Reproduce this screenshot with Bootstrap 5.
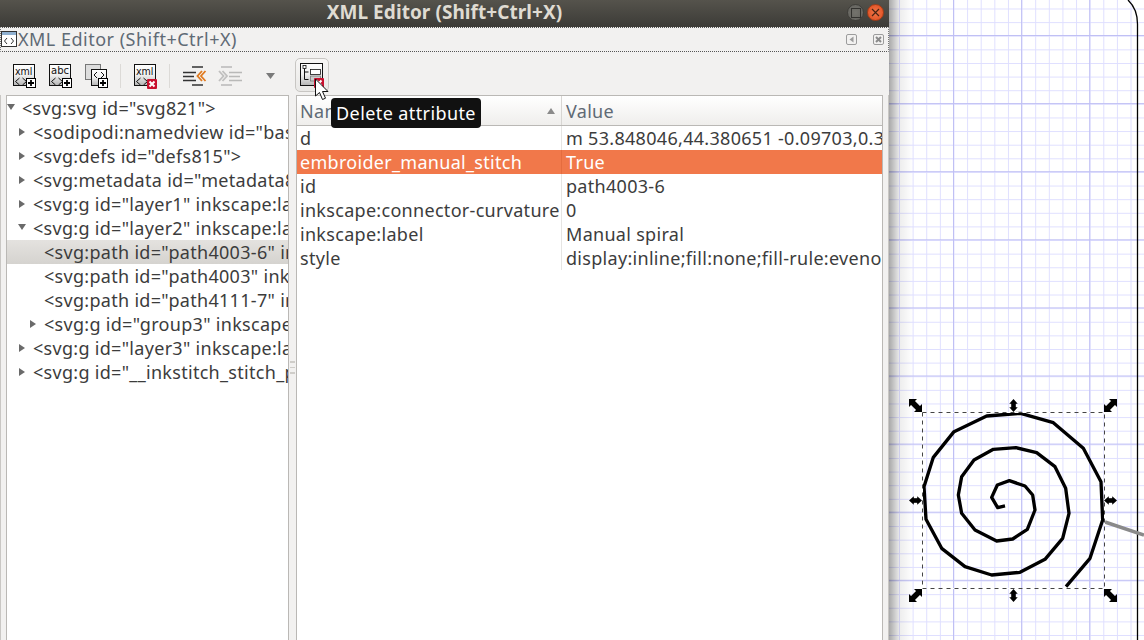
<!DOCTYPE html>
<html lang="en">
<head>
<meta charset="utf-8">
<title>XML Editor</title>
<link href="https://cdn.jsdelivr.net/npm/bootstrap@5.3.0/dist/css/bootstrap.min.css" rel="stylesheet">
<style>
html,body{margin:0;height:640px;overflow:hidden;background:#fff}
body{font-family:"Noto Sans","Open Sans",sans-serif;font-size:18px;letter-spacing:.3px;color:#3c3c3c}
.screen{width:1144px;height:640px}
.win{width:889px;height:640px;background:#f2f1f0;flex:none}
.wtitle{height:27px;background:linear-gradient(#55534c,#3c3b37);color:#dfdbd2;font-weight:700;font-size:19px;letter-spacing:.06px;line-height:25px}
.wbtn{width:17px;height:17px;border-radius:50%;top:4px}
.wmax{right:25px;background:radial-gradient(#74736d,#62615c);border:1px solid #3f3e3a}
.wclose{right:5px;background:radial-gradient(#f0774a,#df4a1c);border:1px solid #a33c18}
.dock{height:25px;border-top:1px dotted #555;border-bottom:1px dotted #555;border-left:1px dotted #777;border-right:1px dotted #777;color:#5f6a75;line-height:25px;letter-spacing:.5px}
.tbar{height:43px;padding-left:12px;padding-top:4px}
.tool{width:24px;height:24px;flex:none;overflow:visible}
.tgap{margin-left:12px}
.tsep{width:1px;height:24px;background:#dcdad7;flex:none}
.tool-on{width:34px;height:34px;border:1px solid #c8c6c3;border-radius:5px;background:linear-gradient(#f7f6f5,#e9e8e6);margin-left:20px;margin-top:-2px;flex:none}
.panes{height:545px;padding-left:5px;padding-right:3px;border-left:1px solid #c9c7c4;border-right:1px solid #c9c7c4}
.tree{width:283px;background:#fff;border:1px solid #bab8b5;border-bottom:0}
.grip{width:7px}
.gripbar{width:5px;height:1.500px;background:#cfcdc9}
.attrs{width:587px;background:#fff;border:1px solid #bab8b5;border-bottom:0}
.trow{height:24px;line-height:24px;white-space:nowrap;overflow:hidden;position:relative;border:0;padding:0;background:transparent;color:#3c3c3c;border-radius:0}
.trow.on{background:linear-gradient(#e4e2df,#d5d3cf)}
.l0{padding-left:15px}.l1{padding-left:26px}.l2{padding-left:37px}
.arr{position:absolute;display:block}
.arr-r{width:0;height:0;border-top:4px solid transparent;border-bottom:4px solid transparent;border-left:6px solid #6a6a6a;top:8px}
.arr-d{width:0;height:0;border-left:4px solid transparent;border-right:4px solid transparent;border-top:6px solid #6a6a6a;top:8px}
.at0{left:0}.at1{left:12px}.at1d{left:11px}.at2{left:23px}
.thead{height:30px;background:linear-gradient(#fff,#efeeec);border-bottom:1px solid #bab8b5;line-height:31px;color:#5f6a75}
.cname{width:265px;flex:none;padding-left:3px;position:relative;overflow:hidden;white-space:nowrap}
.cval{flex:1;padding-left:4px;overflow:hidden;white-space:nowrap;min-width:0}
.thead .cname{border-right:1px solid #d8d6d3}
.crow{height:24px;line-height:24px}
.crow .cname{border-right:1px solid #e6e5e3}
.crow.on{background:#f1784a;color:#fff}
.crow.on .cname{border-right-color:#e56c3e}
.sort{position:absolute;right:6px;top:12px;width:0;height:0;border-left:4px solid transparent;border-right:4px solid transparent;border-bottom:6px solid #8a8a8a}
.tipbox{position:absolute;left:331px;top:98px;width:150px;height:30px;background:#111;color:#fff;border-radius:4px;text-align:center;line-height:30px;z-index:5;white-space:nowrap;letter-spacing:.4px}
.ptr{position:absolute;left:314px;top:78px;z-index:6}
.cvs{flex:1;position:relative;overflow:hidden}
.cvs svg{display:block}
.shade{position:absolute;left:0;top:0;bottom:0;width:24px;background:linear-gradient(90deg,rgba(0,0,0,.34),rgba(0,0,0,.07) 45%,rgba(0,0,0,0))}
.ico text{font-family:"DejaVu Sans","Liberation Sans",sans-serif;fill:#111;letter-spacing:0}
</style>
</head>
<body>
<svg width="0" height="0" class="position-absolute">
<defs>
<linearGradient id="gb" x1="0" y1="0" x2="0" y2="1"><stop offset="0" stop-color="#fff"/><stop offset=".5" stop-color="#f0f0f0"/><stop offset="1" stop-color="#b4b4b4"/></linearGradient>
<g id="plus"><rect x="14.500" y="14.500" width="9" height="9" fill="#fff" stroke="#000"/><path d="M19 16v6M16 19h6" stroke="#000" stroke-width="1.800"/></g>
<g id="del"><rect x="14" y="15" width="10" height="10" rx="1" fill="#c8102e"/><path d="M16.500 17.500l5 5M21.500 17.500l-5 5" stroke="#fff" stroke-width="2"/></g>
<g id="box"><rect x="1.500" y=".5" width="21" height="21" fill="url(#gb)" stroke="#111"/></g>
<path id="lg" d="M7.500 14l-4 3.500 4 3.500M10.500 14l4 3.500-4 3.500" fill="none" stroke="#111"/>
<g id="dg"><path d="M-6.500-6.500h8l-8 8zM6.500 6.500h-8l8-8z"/><path d="M-3.500-3.500l7 7" stroke="#000" stroke-width="5.500"/></g>
<g id="vt"><path d="M0-6.500l4.200 4.800h-8.400zM0 6.500l4.200-4.800h-8.400z"/><rect x="-2.300" y="-2.500" width="4.600" height="5"/></g>
</defs>
</svg>
<div class="screen d-flex">
  <div class="win d-flex flex-column position-relative">
    <div class="wtitle text-center position-relative">XML Editor (Shift+Ctrl+X)
      <span class="wbtn wmax position-absolute d-flex align-items-center justify-content-center"><svg width="10" height="10"><rect x=".5" y=".5" width="9" height="9" fill="none" stroke="#33322f"/></svg></span>
      <span class="wbtn wclose position-absolute d-flex align-items-center justify-content-center"><svg width="9" height="9"><path d="M1 1l7 7M8 1l-7 7" stroke="#4a2312" stroke-width="1.200"/></svg></span>
    </div>
    <div class="dock d-flex align-items-center">
      <svg width="17" height="17" viewBox="0 0 17 17"><rect x=".5" y=".5" width="15" height="15" fill="#fff" stroke="#333"/><rect x="1" y="1" width="14" height="3" fill="#8fb0d0"/><path d="M6 7l-2.500 3 2.500 3M10 7l2.500 3-2.500 3" fill="none" stroke="#333"/></svg>
      <span>XML Editor (Shift+Ctrl+X)</span>
      <span class="ms-auto d-flex gap-3 me-1 align-items-center">
        <svg width="11" height="11"><rect x=".5" y=".5" width="10" height="10" rx="1.500" fill="none" stroke="#9c9c9c"/><path d="M7.500 2.500v6l-4-3z" fill="#9c9c9c"/></svg>
        <svg width="11" height="11"><rect x=".5" y=".5" width="10" height="10" rx="1.500" fill="none" stroke="#9c9c9c"/><path d="M3 3l5 5M8 3l-5 5" stroke="#8a8a8a" stroke-width="2"/></svg>
      </span>
    </div>
    <div class="tbar d-flex align-items-center">
      <svg class="tool ico" viewBox="0 0 24 24"><use href="#box"/><text x="3" y="10.500" font-size="10.500" textLength="17.500" lengthAdjust="spacingAndGlyphs">xml</text><use href="#lg"/><use href="#plus"/></svg>
      <svg class="tool ico tgap" viewBox="0 0 24 24"><use href="#box"/><text x="3" y="10" font-size="10.500" textLength="18" lengthAdjust="spacingAndGlyphs">abc</text><use href="#lg"/><use href="#plus"/></svg>
      <svg class="tool ico tgap" viewBox="0 0 24 24"><rect x="1.500" y=".5" width="15" height="15" fill="#ddd" stroke="#777"/><rect x="7.500" y="5.500" width="15" height="16" fill="url(#gb)" stroke="#111"/><path d="M13 8l-3 3 3 3M17 8l3 3-3 3" fill="none" stroke="#111"/><use href="#plus"/></svg>
      <span class="tsep tgap"></span>
      <svg class="tool ico tgap" viewBox="0 0 24 24"><use href="#box"/><text x="3" y="10.500" font-size="10.500" textLength="17.500" lengthAdjust="spacingAndGlyphs">xml</text><use href="#lg"/><use href="#del"/></svg>
      <span class="tsep tgap"></span>
      <svg class="tool tgap" viewBox="0 0 24 24"><path d="M10 3h11M1 8.500h13M1 12.500h11M1 16.500h13M10 21h11" stroke="#333" stroke-width="1.700"/><path d="M20 7l-4.500 5 4.500 5M23.500 7l-4.500 5 4.500 5" fill="none" stroke="#e07a1f" stroke-width="1.800"/></svg>
      <svg class="tool tgap" viewBox="0 0 24 24" opacity=".4"><path d="M3 3h11M11 8.500h13M11 12.500h11M11 16.500h13M3 21h11" stroke="#666" stroke-width="1.700"/><path d="M1 7l4.500 5-4.500 5M4.500 7l4.500 5-4.500 5" fill="none" stroke="#777" stroke-width="1.800"/></svg>
      <svg width="9" height="6" class="ms-4"><path d="M0 0h9L4.500 6z" fill="#7a7a7a"/></svg>
      <span class="tool-on d-flex align-items-center justify-content-center">
        <svg class="tool" viewBox="0 0 24 24"><rect x=".5" y=".5" width="22" height="22" fill="url(#gb)" stroke="#111"/><rect x="3" y="2.500" width="3" height="3" fill="#fff" stroke="#111" stroke-width=".8"/><path d="M4.500 5.500v11h4M4.500 9h4" fill="none" stroke="#111"/><rect x="10.500" y="6.500" width="10" height="5" fill="#fff" stroke="#111" stroke-width=".8"/><rect x="10.500" y="13" width="10" height="5" fill="#ccc" stroke="#777" stroke-width=".8"/><use href="#del"/></svg>
      </span>
    </div>
    <div class="panes d-flex">
      <div class="tree overflow-hidden">
        <div class="list-group list-group-flush">
          <div class="trow l0"><i class="arr arr-d at0"></i>&lt;svg:svg id="svg821"&gt;</div>
          <div class="trow l1"><i class="arr arr-r at1"></i>&lt;sodipodi:namedview id="base" pagecolor</div>
          <div class="trow l1"><i class="arr arr-r at1"></i>&lt;svg:defs id="defs815"&gt;</div>
          <div class="trow l1"><i class="arr arr-r at1"></i>&lt;svg:metadata id="metadata818"&gt;</div>
          <div class="trow l1"><i class="arr arr-r at1"></i>&lt;svg:g id="layer1" inkscape:label="Layer"</div>
          <div class="trow l1"><i class="arr arr-d at1d"></i>&lt;svg:g id="layer2" inkscape:label="Layer"</div>
          <div class="trow l2 on">&lt;svg:path id="path4003-6" inkscape:label</div>
          <div class="trow l2">&lt;svg:path id="path4003" inkscape:label</div>
          <div class="trow l2">&lt;svg:path id="path4111-7" inkscape:label</div>
          <div class="trow l2"><i class="arr arr-r at2"></i>&lt;svg:g id="group3" inkscape:label="x"</div>
          <div class="trow l1"><i class="arr arr-r at1"></i>&lt;svg:g id="layer3" inkscape:label="Layer"</div>
          <div class="trow l1"><i class="arr arr-r at1"></i>&lt;svg:g id="__inkstitch_stitch_plan__"&gt;</div>
        </div>
      </div>
      <div class="grip d-flex flex-column align-items-center justify-content-center gap-1"><span class="gripbar"></span><span class="gripbar"></span><span class="gripbar"></span></div>
      <div class="attrs overflow-hidden">
        <div class="thead d-flex"><div class="cname">Name<i class="sort"></i></div><div class="cval">Value</div></div>
        <div class="crow d-flex"><div class="cname">d</div><div class="cval">m 53.848046,44.380651 -0.09703,0.3327 -0.1</div></div>
        <div class="crow d-flex on"><div class="cname">embroider_manual_stitch</div><div class="cval">True</div></div>
        <div class="crow d-flex"><div class="cname">id</div><div class="cval">path4003-6</div></div>
        <div class="crow d-flex"><div class="cname">inkscape:connector-curvature</div><div class="cval">0</div></div>
        <div class="crow d-flex"><div class="cname">inkscape:label</div><div class="cval">Manual spiral</div></div>
        <div class="crow d-flex"><div class="cname">style</div><div class="cval">display:inline;fill:none;fill-rule:evenodd;stroke</div></div>
      </div>
    </div>
    <div class="tipbox">Delete attribute</div>
    <svg class="ptr" width="16" height="24" viewBox="0 0 16 24"><path d="M1.500 1v17l4-3.500 3 7 3-1.300-3-6.700h5.500z" fill="#fff" stroke="#111"/></svg>
  </div>
  <div class="cvs">
    <svg width="255" height="640" viewBox="889 0 255 640">
      <defs>
        <pattern id="gmin" patternUnits="userSpaceOnUse" x="899" y="8.500" width="13.620" height="13.620"><path d="M.5 0v13.620M0 .5h13.620" stroke="#dfdfff" fill="none"/></pattern>
        <pattern id="gmaj" patternUnits="userSpaceOnUse" x="953" y="35" width="68.100" height="68.100"><path d="M.5 0v68.100M0 .5h68.100" stroke="#c0c0f4" fill="none"/></pattern>
      </defs>
      <rect x="889" y="0" width="255" height="640" fill="#fff"/>
      <rect x="889" y="0" width="255" height="640" fill="url(#gmin)"/>
      <rect x="889" y="0" width="255" height="640" fill="url(#gmaj)"/>
      <path d="M1128 0q9.500 9 9.500 24V640" fill="none" stroke="#000" stroke-width="1.300"/>
      <path d="M1105 522L1144 535" stroke="#8a8a8a" stroke-width="3.500"/>
      <g transform="translate(890 380) scale(.33333)">
        <polyline fill="none" stroke="#000" stroke-width="10" stroke-linejoin="round" points="528,620 600,535 638,420 633,305 580,205 490,128 392,100 290,108 192,155 130,232 102,320 108,418 155,505 225,560 305,585 390,577 465,538 518,475 537,400 527,325 495,260 440,218 378,203 310,208 252,240 215,290 205,345 215,400 255,450 320,483 368,477 412,448 435,390 428,345 405,318 358,302 322,315 305,352 323,383 345,378"/>
      </g>
      <rect x="922.500" y="412.500" width="182" height="176" fill="none" stroke="#fff"/>
      <rect x="922.500" y="412.500" width="182" height="176" fill="none" stroke="#444" stroke-dasharray="4 4"/>
      <g fill="#000">
        <use href="#dg" transform="translate(915.500 405.500)"/>
        <use href="#dg" transform="translate(1110.500 405.500) rotate(90)"/>
        <use href="#dg" transform="translate(915.500 595.500) rotate(90)"/>
        <use href="#dg" transform="translate(1110.500 595.500)"/>
        <use href="#vt" transform="translate(1013.500 405.500)"/>
        <use href="#vt" transform="translate(1013.500 595.500)"/>
        <use href="#vt" transform="translate(915.500 500.500) rotate(90)"/>
        <use href="#vt" transform="translate(1110.500 500.500) rotate(90)"/>
      </g>
    </svg>
    <div class="shade"></div>
  </div>
</div>
<script src="https://cdn.jsdelivr.net/npm/bootstrap@5.3.0/dist/js/bootstrap.bundle.min.js"></script>
</body>
</html>
